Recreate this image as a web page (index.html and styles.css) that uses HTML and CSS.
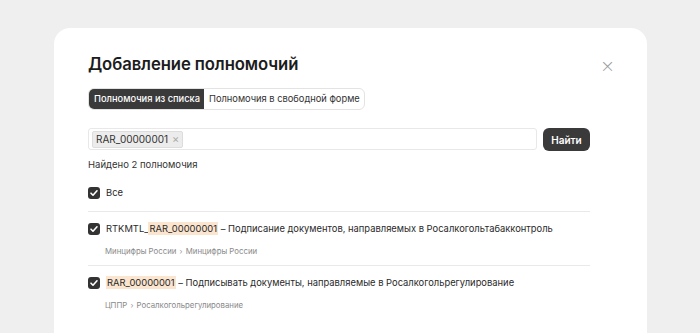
FILE: index.html
```html
<!DOCTYPE html>
<html lang="ru">
<head>
    <meta charset="UTF-8">
    <title>Добавление полномочий</title>
    <link rel="stylesheet" href="styles.css">
</head>
<body>
    <div class="modal">
        <div class="modal-header">
            <h2 class="modal-title">Добавление полномочий</h2>
            <button class="close-button">×</button>
        </div>

        <div class="tabs">
            <div class="tab active">Полномочия из списка</div>
            <div class="tab">Полномочия в свободной форме</div>
        </div>

        <div class="search-row">
            <div class="search-input">
                <span class="chip">RAR_00000001 <span class="chip-x">×</span></span>
            </div>
            <button class="search-button">Найти</button>
        </div>

        <div class="found">Найдено 2 полномочия</div>

        <label class="check-row all">
            <span class="checkbox"><svg viewBox="0 0 12 12" width="12" height="12"><path d="M3 6.2l2 2 4-4.4" fill="none" stroke="#fff" stroke-width="1.6" stroke-linecap="round" stroke-linejoin="round"/></svg></span>
            <span>Все</span>
        </label>

        <div class="item">
            <label class="check-row">
                <span class="checkbox"><svg viewBox="0 0 12 12" width="12" height="12"><path d="M3 6.2l2 2 4-4.4" fill="none" stroke="#fff" stroke-width="1.6" stroke-linecap="round" stroke-linejoin="round"/></svg></span>
                <span>RTKMTL_<mark>RAR_00000001</mark> – Подписание документов, направляемых в Росалкогольтабакконтроль</span>
            </label>
            <div class="item-path">Минцифры России <span class="sep">›</span> Минцифры России</div>
        </div>

        <div class="item">
            <label class="check-row">
                <span class="checkbox"><svg viewBox="0 0 12 12" width="12" height="12"><path d="M3 6.2l2 2 4-4.4" fill="none" stroke="#fff" stroke-width="1.6" stroke-linecap="round" stroke-linejoin="round"/></svg></span>
                <span><mark>RAR_00000001</mark> – Подписывать документы, направляемые в Росалкогольрегулирование</span>
            </label>
            <div class="item-path">ЦППР <span class="sep">›</span> Росалкогольрегулирование</div>
        </div>
    </div>
</body>
</html>
```

FILE: styles.css
```css
* {
    margin: 0;
    padding: 0;
    box-sizing: border-box;
}

body {
    font-family: Inter, 'Noto Sans', sans-serif;
    background: #efefef;
    color: #222;
    height: 333px;
    overflow: hidden;
    padding: 28px 0 0 54px;
}

.modal {
    width: 593px;
    height: 340px;
    background: #fff;
    border-radius: 16px;
    padding: 24px 34px 0 34px;
}

.modal-header {
    display: flex;
    justify-content: space-between;
    align-items: center;
    height: 24px;
}

.modal-title {
    font-size: 16.7px;
    font-weight: 600;
    color: #1c1c1c;
    letter-spacing: -0.1px;
}

.close-button {
    background: none;
    border: none;
    color: #9a9a9a;
    font-size: 18px;
    font-weight: 300;
    margin-right: -1px;
    margin-top: 4px;
    width: 14px;
    line-height: 14px;
    font-family: 'DejaVu Sans', sans-serif;
}

/* табы */
.tabs {
    display: inline-flex;
    margin-top: 12px;
    border: 1px solid #e3e3e3;
    border-radius: 6px;
    height: 22px;
    overflow: hidden;
}

.tab {
    font-size: 9.3px;
    padding: 0 4px 0 5px;
    line-height: 20px;
    color: #333;
}

.tab.active {
    background: #3a3a3a;
    color: #fff;
    font-weight: 500;
}

/* поиск */
.search-row {
    display: flex;
    gap: 6px;
    margin-top: 18px;
    width: 502px;
}

.search-input {
    flex: 1;
    height: 22px;
    border: 1px solid #e8e8e8;
    border-radius: 3px;
    padding: 2px 3px;
    display: flex;
    align-items: center;
}

.chip {
    background: #ececec;
    border: 1px solid #ddd;
    border-radius: 2px;
    font-size: 10px;
    color: #333;
    padding: 0 3px;
    line-height: 15px;
}

.chip-x {
    color: #aaa;
    font-size: 11px;
    margin-left: 1px;
}

.search-button {
    background: #3a3a3a;
    color: #fff;
    border: none;
    border-radius: 6px;
    font-family: inherit;
    font-size: 10px;
    font-weight: 600;
    width: 47px;
    height: 23px;
}

.found {
    font-size: 9.5px;
    color: #333;
    margin-top: 8px;
}

.check-row {
    display: flex;
    align-items: center;
    gap: 6px;
    font-size: 9.4px;
    line-height: 12px;
    color: #2a2a2a;
}

.check-row.all {
    margin-top: 17px;
    padding-bottom: 12px;
    border-bottom: 1px solid #e9e9e9;
    width: 502px;
}

.checkbox {
    width: 12px;
    height: 12px;
    background: #333;
    border-radius: 3px;
    display: flex;
    align-items: center;
    justify-content: center;
    flex: none;
}

mark {
    background: #fbe5cf;
    color: #2a2a2a;
    padding: 1px 1px;
}

.item {
    width: 502px;
    padding: 11px 0 9px;
    border-bottom: 1px solid #e9e9e9;
}

.item:last-child {
    border-bottom: none;
}

.item-path {
    font-size: 7.8px;
    line-height: 10px;
    color: #8a8a8a;
    margin-top: 11px;
    padding-left: 17px;
}

.sep {
    color: #999;
    margin: 0 1px;
}
```
